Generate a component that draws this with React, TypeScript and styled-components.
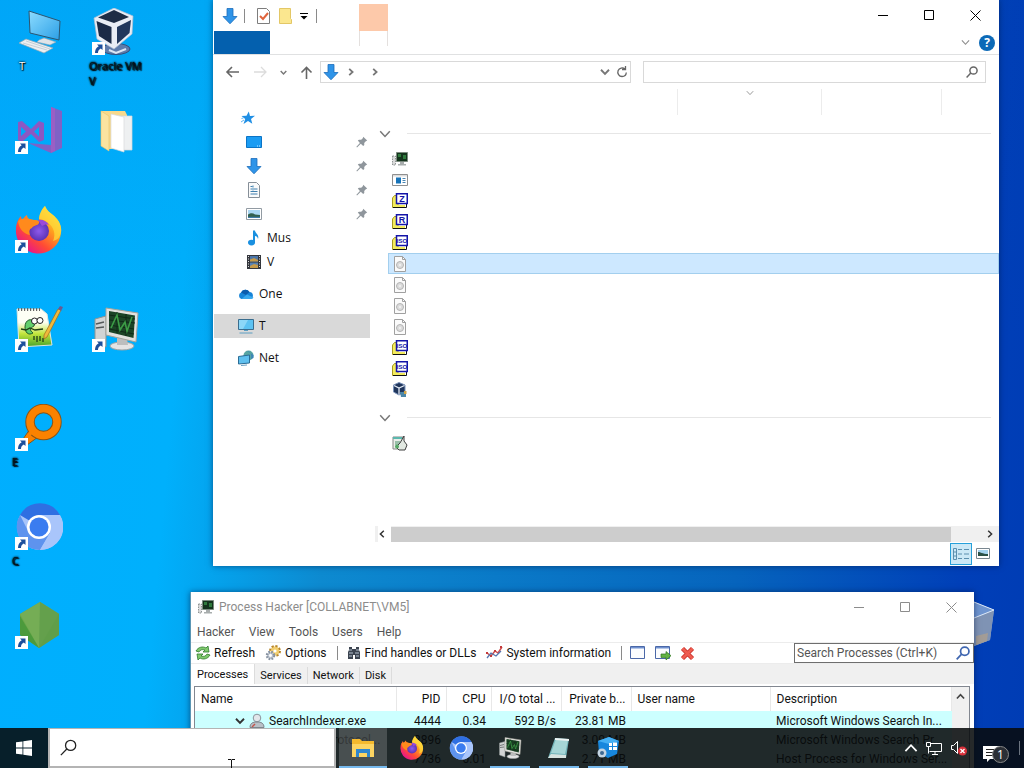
import { ReactNode } from 'react';
import styled, { createGlobalStyle } from 'styled-components';

const GlobalStyle = createGlobalStyle`
    * {
        box-sizing: border-box;
    }
    body {
        margin: 0;
        overflow: hidden;
        font-family: 'Open Sans', 'Noto Sans', sans-serif;
        font-size: 12px;
        color: #111;
    }
    button, input {
        font: inherit;
        color: inherit;
        border: 0;
        padding: 0;
        margin: 0;
        background: none;
    }
    ul {
        list-style: none;
        margin: 0;
        padding: 0;
    }
    svg {
        display: block;
        flex: none;
    }
`;

const Desktop = styled.main`
    position: relative;
    height: 100vh;
    overflow: hidden;
    background: linear-gradient(180deg, rgba(0, 60, 150, 0.07), transparent 45%),
        linear-gradient(95deg, #00aeff 0%, #00b0fc 19%, #0d8ad0 34%, #0664bd 72%, #003fb8 93%, #003cb4 100%);
`;

const Shortcuts = styled.div`
    display: grid;
    grid-auto-flow: column;
    grid-template-rows: repeat(7, 99px);
    grid-auto-columns: 77px;
    width: max-content;
`;

const ShortcutButton = styled.button`
    position: relative;
    display: flex;
    flex-direction: column;
    align-items: center;
    padding-top: 8px;
`;

const ShortcutLabel = styled.span<{ $light?: boolean }>`
    align-self: stretch;
    padding: 2px 0 0 ${props => (props.$light ? '19px' : '12px')};
    text-align: left;
    white-space: pre-line;
    font-size: 11px;
    line-height: 15px;
    color: ${props => (props.$light ? '#fff' : '#04141c')};
    text-shadow: 0 0 2px #000, 0 0 2px #000, 1px 1px 1px #000;
`;

const ArrowBadge = styled.svg`
    position: absolute;
    left: 15px;
    top: 42px;
`;

const RecycleBin = styled.div`
    position: absolute;
    right: 28px;
    top: 600px;
`;

const Window = styled.section`
    position: absolute;
    display: flex;
    flex-direction: column;
    background: #fff;
    box-shadow: 0 0 6px rgba(0, 20, 60, 0.55);
`;

const ExplorerWindow = styled(Window)`
    left: 213px;
    right: 25px;
    top: 0;
    height: 566px;
`;

const HackerWindow = styled(Window)`
    left: 190px;
    right: 50px;
    top: 592px;
    height: 200px;
    border-left: 1px solid #5a96b4;
    font-family: Roboto, 'Open Sans', sans-serif;
`;

const ExplorerTitle = styled.header`
    display: flex;
    height: 31px;
    padding: 0 1px 0 9px;
`;

const QuickAccess = styled.div`
    display: flex;
    align-items: center;
    gap: 6px;
    width: 137px;
`;

const Divider = styled.span<{ $color?: string }>`
    width: 1px;
    height: 14px;
    background: ${props => props.$color || '#8a8a8a'};
`;

const ContextTab = styled.div`
    width: 29px;
    height: 27px;
    margin-top: 4px;
    background: #fdc9aa;
`;

const WindowButtons = styled.div`
    display: flex;
    margin-left: auto;
`;

const WindowButton = styled.button<{ $dim?: boolean }>`
    display: grid;
    place-items: center;
    width: 46px;
    height: 30px;
    color: ${props => (props.$dim ? '#8c8c8c' : '#000')};
`;

const RibbonTabs = styled.div`
    display: flex;
    align-items: center;
    height: 24px;
    padding: 0 4px 0 1px;
    border-bottom: 1px solid #e0e1e2;
`;

const FileTab = styled.button`
    align-self: stretch;
    width: 56px;
    background: #0460ae;
`;

const ContextTabBody = styled.div`
    align-self: flex-start;
    width: 29px;
    height: 15px;
    margin: 0 auto 0 89px;
    border: solid #e4e0de;
    border-width: 0 1px;
`;

const HelpButton = styled.button`
    width: 16px;
    height: 16px;
    margin-left: 9px;
    border-radius: 50%;
    background: #0b69b7;
    color: #fff;
    font-weight: 700;
    line-height: 16px;
`;

const AddressRow = styled.div`
    display: flex;
    align-items: center;
    height: 34px;
    padding: 0 13px 0 12px;
`;

const NavButtons = styled.div`
    display: flex;
    align-items: center;
    justify-content: space-between;
    width: 88px;
    margin-right: 7px;
`;

const PathBox = styled.div`
    display: flex;
    align-items: center;
    gap: 8px;
    flex: 312 1 0;
    height: 22px;
    padding: 0 2px;
    border: 1px solid #d9d9d9;
`;

const PathTools = styled.div`
    display: flex;
    align-items: center;
    gap: 6px;
    margin-left: auto;
`;

const ExplorerSearch = styled.label`
    display: flex;
    align-items: center;
    flex: 341 1 0;
    height: 22px;
    margin-left: 12px;
    padding-right: 7px;
    border: 1px solid #d9d9d9;
    input {
        flex: 1;
        min-width: 0;
        outline: none;
    }
`;

const ExplorerBody = styled.div`
    display: flex;
    flex: 1;
    min-height: 0;
`;

const Tree = styled.nav`
    width: 157px;
    padding: 17px 0 0 1px;
`;

const TreeGroup = styled.ul`
    margin-bottom: 8px;
`;

const TreeItem = styled.button<{ $depth?: number; $active?: boolean }>`
    display: flex;
    align-items: center;
    width: 100%;
    height: 24px;
    padding: 0 2px 0 ${props => (props.$depth ? '32px' : '24px')};
    gap: 5px;
    text-align: left;
    background: ${props => (props.$active ? '#d9d9d9' : 'transparent')};
    span {
        flex: 1;
        line-height: 14px;
    }
`;

const FilePane = styled.div`
    display: flex;
    flex-direction: column;
    flex: 1;
    min-width: 0;
    padding-left: 5px;
`;

const ColumnHeads = styled.div`
    display: grid;
    grid-template-columns: 303px 144px 120px 1fr;
    height: 26px;
    margin-bottom: 4px;
    span {
        display: flex;
        justify-content: center;
        border-right: 1px solid #ececec;
    }
    span:last-child {
        border: 0;
    }
`;

const GroupHead = styled.div`
    display: flex;
    align-items: center;
    gap: 16px;
    height: 29px;
    padding: 0 8px 0 4px;
    hr {
        flex: 1;
        margin: 0;
        border: 0;
        border-top: 1px solid #e6e6e6;
    }
`;

const FileList = styled.ul`
    margin: 0 0 3px 13px;
`;

const FileRow = styled.li<{ $selected?: boolean }>`
    display: flex;
    align-items: center;
    height: 21px;
    padding-left: 3px;
    border: 1px solid ${props => (props.$selected ? '#a3cfee' : 'transparent')};
    background: ${props => (props.$selected ? '#cde8ff' : 'transparent')};
`;

const ScrollRow = styled.div`
    display: flex;
    align-items: center;
    height: 16px;
    margin-top: auto;
    padding: 0 5px 0 3px;
    background: #f0f0f0;
`;

const ScrollLeft = styled.button`
    width: 13px;
    height: 16px;
    background: #fff;
`;

const ScrollThumb = styled.div`
    flex: 1;
    height: 15px;
    margin-right: 35px;
    background: #cdcdcd;
`;

const ViewSwitch = styled.div`
    display: flex;
    justify-content: flex-end;
    align-items: center;
    height: 24px;
    padding-right: 5px;
`;

const ViewButton = styled.button<{ $active?: boolean }>`
    display: grid;
    place-items: center;
    width: 22px;
    height: 22px;
    border: 1px solid ${props => (props.$active ? '#26a0da' : 'transparent')};
    background: ${props => (props.$active ? '#cbe8f6' : 'transparent')};
`;

const HackerTitle = styled.header`
    display: flex;
    align-items: center;
    gap: 5px;
    height: 30px;
    padding-left: 7px;
    color: #8c8c8c;
`;

const MenuBar = styled.div`
    display: flex;
    gap: 14px;
    height: 20px;
    padding-left: 6px;
    line-height: 20px;
    color: #555;
`;

const Toolbar = styled.div`
    display: flex;
    align-items: center;
    height: 22px;
    padding-left: 4px;
    border: solid #ececec;
    border-width: 1px 0;
`;

const ToolButton = styled.button`
    display: flex;
    align-items: center;
    gap: 3px;
    height: 20px;
    margin-right: 10px;
`;

const ToolDivider = styled(Divider)`
    margin-right: 8px;
`;

const IconButton = styled.button`
    margin-right: 8px;
`;

const HackerSearch = styled.label`
    display: flex;
    align-items: center;
    width: 180px;
    height: 20px;
    margin-left: auto;
    padding: 0 3px 0 2px;
    border: 1px solid #6e6e6e;
    input {
        flex: 1;
        min-width: 0;
        outline: none;
    }
    input::placeholder {
        color: #555;
        opacity: 1;
    }
`;

const TabStrip = styled.div`
    display: flex;
    align-items: flex-end;
    height: 20px;
    background: #f0f0f0;
    font-size: 11px;
`;

const Tab = styled.button<{ $active?: boolean }>`
    height: ${props => (props.$active ? '20px' : '17px')};
    padding: 0 ${props => (props.$active ? '6px' : '5px')};
    border-right: 1px solid #dcdcdc;
    background: ${props => (props.$active ? '#fff' : 'transparent')};
`;

const TablePane = styled.div`
    display: flex;
    flex: 1;
    margin: 2px 4px 0 3px;
    border: 1px solid #828790;
    overflow: hidden;
`;

const ProcessTable = styled.table`
    flex: 1;
    align-self: flex-start;
    table-layout: fixed;
    width: 100%;
    border-collapse: collapse;
    th {
        height: 24px;
        padding: 0 5px 0 6px;
        font-weight: 400;
        border-right: 1px solid #e8e8e8;
    }
    td {
        height: 19px;
        padding: 0 5px 0 6px;
        line-height: 18px;
    }
    th, td {
        white-space: nowrap;
    }
`;

const ProcessRow = styled.tr`
    background: #ccffff;
`;

const Cell = styled.td<{ $right?: boolean }>`
    text-align: ${props => (props.$right ? 'right' : 'left')};
`;

const ProcessName = styled.div<{ $depth: number }>`
    display: flex;
    align-items: center;
    gap: 4px;
    padding-left: ${props => props.$depth * 17}px;
`;

const VerticalScroll = styled.div`
    width: 17px;
    padding: 5px 4px;
    background: #f0f0f0;
`;

const Taskbar = styled.footer`
    position: absolute;
    left: 0;
    right: 0;
    bottom: 0;
    display: flex;
    height: 40px;
    background: rgba(8, 11, 13, 0.88);
`;

const StartButton = styled.button`
    display: grid;
    place-items: center;
    width: 48px;
`;

const TaskSearch = styled.label`
    display: flex;
    align-items: center;
    width: 288px;
    margin-right: 3px;
    padding-left: 10px;
    border: 2px solid #b4b4b4;
    border-top-width: 1px;
    background: #fff;
    input {
        flex: 1;
        min-width: 0;
        outline: none;
    }
`;

const TaskButton = styled.button<{ $active?: boolean; $running?: boolean }>`
    display: flex;
    flex-direction: column;
    align-items: center;
    justify-content: space-between;
    width: 48px;
    padding-top: 8px;
    margin-right: 1px;
    background: ${props => (props.$active ? 'rgba(255, 255, 255, 0.18)' : 'transparent')};
    &::after {
        content: '';
        width: ${props => (props.$active ? '48px' : '40px')};
        height: 2px;
        background: ${props => (props.$active || props.$running ? '#76b9ed' : 'transparent')};
    }
`;

const Tray = styled.div`
    display: flex;
    align-items: center;
    gap: 7px;
    margin-left: auto;
    padding-right: 4px;
`;

const NoticeButton = styled.button`
    position: relative;
    width: 30px;
    height: 40px;
    margin: 0 3px 0 4px;
    padding: 12px 0 0 4px;
`;

const NoticeCount = styled.span`
    position: absolute;
    left: 13px;
    top: 18px;
    width: 17px;
    height: 17px;
    border: 1px solid #888;
    border-radius: 50%;
    background: #2b2f36;
    color: #fff;
    font-size: 12px;
    line-height: 15px;
    text-align: center;
`;

const PointerMark = styled.svg`
    position: absolute;
    left: 227px;
    bottom: 0;
`;

const Chevron = ({ size = 8, dir = 'down', color = '#777', weight = 1.3 }: any) => {
    const turn: any = { down: 0, left: 90, up: 180, right: 270 };
    return (
        <svg width={size} height={size} viewBox="0 0 8 8" fill="none" stroke={color} strokeWidth={weight}>
            <path d="M0.8 2.2 4 5.6 7.2 2.2" transform={`rotate(${turn[dir]} 4 4)`} />
        </svg>
    );
};

const DownArrow = ({ size = 16 }) => (
    <svg width={size} height={size} viewBox="0 0 16 16">
        <path d="M5 0.5h6v8h4L8 15.8 1 8.5h4z" fill="#2f94e8" stroke="#1c6dbb" strokeWidth="0.8" />
    </svg>
);

const Lens = ({ size = 13, color = '#666', weight = 1.6 }: any) => (
    <svg width={size} height={size} viewBox="0 0 16 16" fill="none" stroke={color} strokeWidth={weight}>
        <circle cx="10" cy="6" r="4.8" />
        <path d="M6.4 9.4 0.8 15.2" />
    </svg>
);

const MinimizeIcon = () => (
    <svg width="11" height="11" stroke="currentColor">
        <path d="M0 5.5h10" />
    </svg>
);

const MaximizeIcon = () => (
    <svg width="11" height="11" fill="none" stroke="currentColor">
        <path d="M0.5 0.5h9v9h-9z" />
    </svg>
);

const CloseIcon = () => (
    <svg width="11" height="11" fill="none" stroke="currentColor">
        <path d="M0.5 0.5l10 10M10.5 0.5l-10 10" />
    </svg>
);

const PinIcon = () => (
    <svg width="12" height="12" viewBox="0 0 12 12">
        <path d="M7.2 0.8 11.2 4.6 9.8 5.2 8.2 7 8.3 9 7.2 10 4.8 7.8 1 11.4 0.4 10.8 3.9 7 1.8 4.6 3 3.8 5.2 3.8 6.8 2.2z" fill="#8f969c" />
    </svg>
);

const StarIcon = () => (
    <svg width="18" height="16" viewBox="0 0 18 16">
        <path d="M10.8 1.5 12 6l5-.2-4 3.200 1.300 4.800L10 11l-4.500 3 1.700-5L3.500 6l5-.2z" fill="#1f8fe5" />
        <path d="M3 12l3-2M3.500 8.500l2-.6" stroke="#5db3f2" />
    </svg>
);

const ScreenIcon = () => (
    <svg width="16" height="16" viewBox="0 0 16 16">
        <path d="M0.5 2.5h15v11h-15z" fill="#1b9cf3" stroke="#0b74c6" />
        <path d="M11 12h1M13 12h1" stroke="#cdeaff" />
    </svg>
);

const DocumentIcon = () => (
    <svg width="16" height="16" viewBox="0 0 16 16">
        <path d="M2.5 0.5h8l3 3v12h-11z" fill="#fafafa" stroke="#868f98" />
        <path d="M4.5 4.5h3M4.5 7h7M4.5 9.5h7M4.5 12h7" stroke="#3f7fae" />
        <path d="M7 3v6" stroke="#9ac0d8" />
    </svg>
);

const PictureIcon = () => (
    <svg width="16" height="16" viewBox="0 0 16 16">
        <path d="M0.5 2.5h15v11h-15z" fill="#fff" stroke="#929ba3" />
        <path d="M2 4h12v8H2z" fill="#a9d7f3" />
        <path d="M2 8.500c3-2 5-1.500 7 0l5 .5v3H2z" fill="#32604f" />
        <path d="M2 10.800h12V12H2z" fill="#3f7ca8" />
    </svg>
);

const MusicIcon = () => (
    <svg width="16" height="16" viewBox="0 0 16 16" fill="#1a90e0">
        <ellipse cx="5.500" cy="12.600" rx="3.500" ry="2.800" />
        <path d="M7 0.500h2c.3 3 4.500 4 3 8.500-.3-2-1.500-2.800-3-3v7H7z" />
    </svg>
);

const VideoIcon = () => (
    <svg width="16" height="16" viewBox="0 0 16 16">
        <path d="M1 1h14v14H1z" fill="#33363c" />
        <path d="M4 2h8v5.500H4z" fill="#4c76a8" />
        <path d="M4 8.500h8V14H4z" fill="#5780b0" />
        <path d="M4 5.500 8 4l4 2v1.500H4zM4 12l4-2 4 1v3H4z" fill="#c59a4a" />
        <path d="M2.500 2v12M13.500 2v12" stroke="#ddd" strokeDasharray="1 1.500" />
    </svg>
);

const CloudIcon = () => (
    <svg width="16" height="16" viewBox="0 0 16 16">
        <path d="M3.500 13a3.500 3.500 0 01-.5-6.500A4.800 4.800 0 0111.500 6 3.600 3.600 0 0112.500 13z" fill="#1684d8" />
        <path d="M3 6.500A4.800 4.800 0 0111.500 6L8 9z" fill="#0b5cad" />
        <path d="M3.500 13 9 8.500l6.500 3A2.800 2.800 0 0112.500 13z" fill="#39a9ee" />
    </svg>
);

const ThisPcIcon = () => (
    <svg width="16" height="16" viewBox="0 0 16 16">
        <path d="M0.500 1.500h15v10h-15z" fill="#5cc2f2" stroke="#3a6d8e" />
        <path d="M1 2h9L5 11H1z" fill="#8cd7f8" />
        <path d="M6 12.500h4M1.500 15h13" stroke="#5c9ec2" />
    </svg>
);

const NetworkIcon = () => (
    <svg width="16" height="16" viewBox="0 0 16 16">
        <circle cx="10.500" cy="5.500" r="5" fill="#58a5a2" />
        <path d="M9 1c3 0 5 3 4 8l2.500-1V5z" fill="#3c85b8" />
        <path d="M0.500 6.500 11.500 5v8l-11 1z" fill="#5fc0ef" stroke="#2b6c95" />
        <path d="M3 15.500l6-.500" stroke="#6ca0c2" />
    </svg>
);

const ArchiveIcon = ({ label }: { label: string }) => (
    <svg width="16" height="16" viewBox="0 0 16 16">
        <path d="M0.500 5 2.500 2.500H6V14.500H0.500z" fill="#f4ec5c" stroke="#a89a20" />
        <path d="M1 12h12v2.500H1z" fill="#f4ec5c" />
        <path d="M1 14.500h13.500V10" stroke="#111" fill="none" />
        <path d="M4.500 0.750h10.750v9.750H4.500z" fill="#fff" stroke="#1414a8" strokeWidth="1.500" />
        <text x="10" y={label.length > 1 ? 8 : 9} textAnchor="middle" fontFamily="Liberation Sans" fontWeight="700" fontSize={label.length > 1 ? 6 : 9} fill="#1414a8">
            {label}
        </text>
    </svg>
);

const DiscFileIcon = () => (
    <svg width="16" height="16" viewBox="0 0 16 16">
        <path d="M2.500 0.500h8l3 3v12h-11z" fill="#fbfbfb" stroke="#a0a0a0" />
        <path d="M10.500 0.500v3h3" fill="none" stroke="#a0a0a0" />
        <circle cx="8" cy="9" r="3.500" fill="#dcdcdc" stroke="#b4b4b4" />
        <circle cx="8" cy="9" r="1" fill="#f4f4f4" />
    </svg>
);

const AppFileIcon = () => (
    <svg width="16" height="16" viewBox="0 0 16 16">
        <path d="M0.500 2.500h15v11h-15z" fill="#fff" stroke="#8f8f8f" />
        <path d="M1 3h14v1.500H1z" fill="#dcdcdc" />
        <path d="M4 5.500h5v6H4z" fill="#1673b8" />
        <path d="M10.500 6.500h3M10.500 8.500h3M10.500 10.500h3" stroke="#4a86b4" />
    </svg>
);

const InstallerIcon = () => (
    <svg width="16" height="16" viewBox="0 0 16 16">
        <path d="M1 2h10v12H1z" fill="#e9eee9" stroke="#858585" />
        <path d="M1 2h9v2H1z" fill="#5bb8ae" />
        <path d="M3 7h5M3 9h4" stroke="#4a8f6a" />
        <path d="M12 1v5l3 4-2 5H7l-3-3 4-4z" fill="#e2e9e2" stroke="#2b2b2b" strokeWidth="0.900" />
        <circle cx="5" cy="11.500" r="2" fill="#55a866" />
    </svg>
);

const HackerIcon = ({ size = 48 }) => (
    <svg width={size} height={size} viewBox="0 0 48 48">
        <path d="M3 14l11-3v31L3 38z" fill="#d2d4d4" stroke="#8f9494" />
        <path d="M4 19l8-2M4 23l8-1" stroke="#55595a" strokeWidth="1.500" />
        <ellipse cx="30" cy="41" rx="12" ry="4" fill="#e4e4e4" stroke="#9fa3a3" />
        <path d="M25 33h10l1 7H25z" fill="#bcbebe" />
        <path d="M14 3l32 5-2 29-30-7z" fill="#e2e2de" stroke="#a3a39b" />
        <path d="M17 6l26 4.500-1.500 22.500L17 27z" fill="#1c4426" />
        <path d="M17 10l26 4M17 15l26 3M17 20l25 4M17 24l25 5M25 7v21M34 9v22" stroke="#0f2a17" />
        <path d="M19 23l6-13 3 15 5-8 2 9 5-14" fill="none" stroke="#3c9c46" strokeWidth="1.600" />
    </svg>
);

const SmallHackerIcon = () => (
    <svg width="16" height="16" viewBox="0 0 16 16">
        <path d="M0.500 5h3v9h-3z" fill="#dadada" stroke="#8f9494" strokeDasharray="1.500 1" />
        <path d="M4.500 1.500h11v9h-11z" fill="#14331c" stroke="#7b8a7e" />
        <path d="M6 3h3v3H6zM11 4h3v4h-3z" fill="#2f7a3c" />
        <path d="M8 11h4v2H8zM6 13h8v1.500H6z" fill="#a8adad" />
    </svg>
);

const VirtualBoxIcon = ({ size = 48 }) => (
    <svg width={size} height={size} viewBox="0 0 48 48">
        <ellipse cx="24" cy="41" rx="14" ry="5.500" fill="#5f7cab" stroke="#34507e" />
        <path d="M17 42l7 3 10-4" stroke="#dde6f4" strokeWidth="2" fill="none" />
        <path d="M22 0 41 8l-1 18-18 15L5 31 2 10z" fill="#e9edf5" stroke="#b3bfd2" strokeWidth="0.700" />
        <path d="M22 2 37 9 22 15 6 9.500z" fill="#1e2c45" />
        <path d="M4.500 13l15 6v17L7 28z" fill="#1b2a47" />
        <path d="M25 19l14-7-1.500 13L25 36z" fill="#22375c" />
    </svg>
);

const SmallVirtualBoxIcon = () => (
    <svg width="16" height="16" viewBox="0 0 16 16">
        <path d="M7 0.500 13 3v6.500L7 13 1.500 10V3z" fill="#20365c" stroke="#7b93ba" />
        <path d="M2 3.500 7 6l5.500-2.500M7 6v6.500" stroke="#e4ebf6" strokeWidth="1.300" fill="none" />
        <path d="M8 10h6v5H9z" fill="#4b86a8" />
        <path d="M12 9h2.500v3H12z" fill="#d2a448" />
    </svg>
);

const FirefoxIcon = ({ size = 48 }) => (
    <svg width={size} height={size} viewBox="0 0 48 48">
        <defs>
            <linearGradient id="fire" x1="0.850" y1="0.100" x2="0.200" y2="0.900">
                <stop offset="0" stopColor="#fff04a" />
                <stop offset="0.350" stopColor="#ffa01e" />
                <stop offset="0.700" stopColor="#ff4a35" />
                <stop offset="1" stopColor="#e8168a" />
            </linearGradient>
            <radialGradient id="globe">
                <stop offset="0.100" stopColor="#8a56e8" />
                <stop offset="1" stopColor="#5b33b4" />
            </radialGradient>
        </defs>
        <path d="M30 0c2 6 8 8 11 12 3 3 6 8 5 15A22.500 22.500 0 111 23c0-6 3-11 5-13 0 2 1 4 2 5 0-3 2-5 4-6 0 3 2 4 4 5 3 0 5 1 8 1 0-6 3-12 6-15z" fill="url(#fire)" />
        <path d="M30 0c2 6 8 8 11 12 3 3 6 9 5 14-1 6-4 8-8 9 3-7 1-14-6-19-4-3-8-3-8-3 0-5 3-10 6-13z" fill="#ffd83a" opacity=".75" />
        <circle cx="24" cy="25" r="10" fill="url(#globe)" />
        <path d="M3 15c5-4 12-2 16-1 4 0 6 1 5 3-1 3-6 2-7 5-3 1-3 4-2 7-6-1-11-6-12-14z" fill="#ff8a1c" />
        <path d="M23 14c4-1 9 1 11 5-3-1-5 0-7 1z" fill="#9a4ad8" />
    </svg>
);

const ChromiumIcon = ({ size = 48 }) => (
    <svg width={size} height={size} viewBox="0 0 48 48">
        <circle cx="25" cy="24" r="23" fill="#a7c4fa" />
        <path d="M25 24 5 12A23 23 0 0145 12H25z" fill="#2f6fe2" />
        <path d="M5 12A23 23 0 0025 47L35 30 14 30z" fill="#5e93ee" />
        <path d="M45 12H25L35 30 25 47A23 23 0 0045 12z" fill="#a9c5fb" />
        <circle cx="24" cy="24" r="12" fill="#fff" />
        <circle cx="24" cy="24" r="9.500" fill="#3a7cf0" />
    </svg>
);

const ComputerIcon = () => (
    <svg width="48" height="48" viewBox="0 0 48 48">
        <defs>
            <linearGradient id="glass" x1="0" y1="0" x2="1" y2="1">
                <stop offset="0" stopColor="#8ddcff" />
                <stop offset="1" stopColor="#2b9fe6" />
            </linearGradient>
        </defs>
        <path d="M24 32l5-2 12 4-6 3-13-3z" fill="#dfe4e8" stroke="#8fa6b5" strokeWidth="0.600" />
        <path d="M14 3l31 10-1 19-29-7z" fill="url(#glass)" stroke="#2c5570" />
        <path d="M4 35l7-4 27 9-9 5z" fill="#eceff1" stroke="#93a7b3" strokeWidth="0.700" />
        <path d="M8 35l24 7M11 33l24 8" stroke="#b5c2cb" strokeWidth="0.700" />
    </svg>
);

const StudioIcon = () => (
    <svg width="48" height="48" viewBox="0 0 48 48">
        <path d="M36 0l11 4v37l-11 5-23-10 23 2z" fill="#7f62c6" />
        <path d="M36 0l4 1.500V44l-4 2z" fill="#9a5fc4" />
        <path d="M3 15l4-1 9 8 8-8 5 2v17l-5 2-8-8-9 8-4-2zM6 20v9l5-4.500zM24 20l-5 4.500 5 5z" fill="#8b58c2" fillRule="evenodd" />
    </svg>
);

const NotesIcon = () => (
    <svg width="48" height="48" viewBox="0 0 48 48">
        <defs>
            <linearGradient id="meadow" x1="0" y1="0" x2="0" y2="1">
                <stop offset="0.350" stopColor="#fdfff5" />
                <stop offset="0.650" stopColor="#c3e53c" />
                <stop offset="1" stopColor="#45a22c" />
            </linearGradient>
        </defs>
        <path d="M2 4h24l6 5 5 31-33 2z" fill="url(#meadow)" stroke="#dfe6df" />
        <path d="M3 4.500h22" stroke="#666" strokeWidth="3" strokeDasharray="1.200 1.800" />
        <path d="M10 22c0-8 7-9 10-5l-1 4c-4 2-5 4-1 7-5 3-8-1-8-6z" fill="#62cf6c" stroke="#1f5a28" />
        <circle cx="19.500" cy="16" r="3" fill="#fff" stroke="#222" />
        <circle cx="25" cy="15.500" r="3" fill="#fff" stroke="#222" />
        <path d="M6 24l5 1 4-2 5 2 8-1M19 35v-4M22 37v-6M25 36v-5M28 37v-4" stroke="#1f3d16" fill="none" strokeWidth="1.300" />
        <path d="M43 4l3 1-14 27-3 2 0-4z" fill="#f0b93c" stroke="#a06c1a" strokeWidth="0.700" />
        <path d="M43 4l2-3 3 1-2 4z" fill="#6a5a92" />
    </svg>
);

const FinderIcon = () => (
    <svg width="48" height="48" viewBox="0 0 48 48">
        <path d="M15 25 6 38l6 3 11-8" fill="#fb8200" stroke="#8a5416" />
        <circle cx="28.500" cy="18" r="13.500" fill="none" stroke="#8a5416" strokeWidth="9.500" />
        <circle cx="28.500" cy="18" r="13.500" fill="none" stroke="#fb8200" strokeWidth="7.500" />
        <path d="M16 25l-6 10 9-6z" fill="#fb8200" />
    </svg>
);

const NodeIcon = () => (
    <svg width="48" height="48" viewBox="0 0 48 48">
        <path d="M25 0l19 12v21L24 46 5 33V12z" fill="#6aa84a" />
        <path d="M5 12 25 0l19 12-20 34z" fill="#75ad55" />
        <path d="M25 0l19 12v21L24 46z" fill="#5c9a48" opacity=".7" />
        <path d="M5 14l19 32L5 33z" fill="#4c9a3c" />
    </svg>
);

const FolderIcon = () => (
    <svg width="48" height="48" viewBox="0 0 48 48">
        <path d="M9 4h24l2 4v34H16L9 38z" fill="#f7d98c" />
        <path d="M26 9h14v34H28z" fill="#eef0f1" stroke="#d5d9da" strokeWidth="0.700" />
        <path d="M19 7l13 3v35l-13-4z" fill="#fff" stroke="#d8dadb" strokeWidth="0.700" />
        <path d="M9 4l8 5v35l-8-5z" fill="#fbe3a0" stroke="#e5c26c" strokeWidth="0.600" />
    </svg>
);

const BinIcon = () => (
    <svg width="44" height="48" viewBox="0 0 44 48">
        <path d="M2 10 22 2l20 8-4 30-16 6-16-6z" fill="#8fa6cb" />
        <path d="M22 18l20-8-4 30-16 6z" fill="#7f93b4" />
        <path d="M2 10 22 2l20 8-20 8z" fill="#6f95d0" stroke="#dce8f8" />
        <path d="M24 36l12-3-1 8-11 4z" fill="#a39c96" />
    </svg>
);

const ExplorerIcon = () => (
    <svg width="24" height="24" viewBox="0 0 24 24">
        <path d="M1 3h8l2 2h12v16H1z" fill="#f4b92e" />
        <path d="M1 8h22v13H1z" fill="#fcd462" />
        <path d="M5 13h14v8h-3v-4H8v4H5z" fill="#2f86cf" />
    </svg>
);

const NotepadIcon = () => (
    <svg width="24" height="24" viewBox="0 0 24 24">
        <path d="M8 2l14 1-3 19H1z" fill="#72b3b8" />
        <path d="M9 3l12 1-3 14-14-1z" fill="#a6d6d6" />
        <path d="M8 2l14 1v2L8 4z" fill="#eef3f3" />
        <path d="M1 22l3-4 15 1v3z" fill="#d8e4e0" />
    </svg>
);

const SetupIcon = () => (
    <svg width="24" height="24" viewBox="0 0 24 24">
        <path d="M2 5 13 1l10 4-2 13-9 4-9-5z" fill="#1787dd" />
        <path d="M2 5 13 1l10 4-10 3z" fill="#45b0f4" />
        <path d="M13 7h3v3h-3zM17 6.500h4v3.500h-4zM13 11h3v3h-3zM17 11h4v3h-4z" fill="#fff" />
        <circle cx="6" cy="17" r="4.500" fill="#c4d4e2" />
        <circle cx="6" cy="17" r="2" fill="#3d6892" />
    </svg>
);

const RefreshIcon = () => (
    <svg width="16" height="16" viewBox="0 0 16 16" fill="#7fca6c" stroke="#2f7a2c" strokeWidth="0.800">
        <path d="M1 6c2-4 7-5 10-3l2-2 1 6-6 0 2-2C7 4 5 5 4 7z" />
        <path d="M15 10c-2 4-7 5-10 3l-2 2-1-6 6 0-2 2c3 1 5 0 6-2z" />
    </svg>
);

const GearIcon = () => (
    <svg width="17" height="16" viewBox="0 0 17 16">
        <circle cx="10" cy="6" r="4.500" fill="#ecc662" stroke="#b8872b" strokeWidth="3" strokeDasharray="2 1.500" />
        <circle cx="10" cy="6" r="4" fill="#f2cf70" />
        <circle cx="5.500" cy="10.500" r="3.500" fill="#c7ced8" stroke="#8792a1" strokeWidth="2.500" strokeDasharray="1.600 1.200" />
        <circle cx="10" cy="6" r="1.600" fill="#fff" />
        <circle cx="5.500" cy="10.500" r="1.400" fill="#fff" />
    </svg>
);

const BinocularsIcon = () => (
    <svg width="16" height="16" viewBox="0 0 16 16">
        <path d="M3 2h3v2h4V2h3v3l1 2v7H9v-4H7v4H2V7l1-2z" fill="#3c4450" />
        <path d="M3 8h4M9 8h4M3 11h3M10 11h3M3 5h3M10 5h3" stroke="#b8c4d2" />
    </svg>
);

const GraphIcon = () => (
    <svg width="17" height="16" viewBox="0 0 17 16" fill="none">
        <path d="M1 8l4 3 4-5 3 2 4-6" stroke="#d14d4d" strokeWidth="1.500" />
        <path d="M1 13l4-5 5 3 5-5" stroke="#5577b0" strokeWidth="1.300" />
        <path d="M0 7h2v2H0zM8 5h2v2H8zM4 10h2v2H4zM14 1h2v2h-2z" fill="#c33a3a" />
    </svg>
);

const PanelIcon = ({ arrow }: { arrow?: boolean }) => (
    <svg width="17" height="16" viewBox="0 0 17 16">
        <path d="M0.500 1.500h14v12h-14z" fill="#fbfcfe" stroke="#4b68a8" />
        <path d="M1 2h13v1.500H1z" fill="#6f90cf" />
        {arrow && <path d="M6 9h5V6.500l5 4.200-5 4.200v-2.500H6z" fill="#63b344" stroke="#2e7420" strokeWidth="0.700" />}
    </svg>
);

const CrossIcon = () => (
    <svg width="15" height="15" viewBox="0 0 15 15">
        <path d="M2.500 2.500l10 10M12.500 2.500l-10 10" stroke="#c92f2a" strokeWidth="4.400" />
        <path d="M2.500 2.500l10 10M12.500 2.500l-10 10" stroke="#ee5c50" strokeWidth="2.800" />
    </svg>
);

const UserIcon = () => (
    <svg width="16" height="16" viewBox="0 0 16 16">
        <circle cx="8" cy="5" r="3.800" fill="#e2e6ea" stroke="#8b949c" />
        <path d="M1 14.500C1 10 4 9 8 9s7 1 7 5.500z" fill="#b9c0c6" stroke="#7d868d" />
        <path d="M3 14l3-3" stroke="#c2554c" strokeWidth="1.400" />
    </svg>
);

const ShortcutArrow = () => (
    <ArrowBadge width="13" height="13" viewBox="0 0 13 13">
        <path d="M0 0h13v13H0z" fill="#fff" />
        <path d="M5 2.500h5.500V8L8.800 6.400C6.500 7.600 6 9 6 11H3c0-3 1-5.500 3.700-6.800z" fill="#1d4f9c" />
    </ArrowBadge>
);

type ShortcutProps = { icon: ReactNode; name: string; label?: string; light?: boolean; linked?: boolean };

const Shortcut = ({ icon, name, label, light, linked = true }: ShortcutProps) => (
    <ShortcutButton aria-label={name}>
        {icon}
        {linked && <ShortcutArrow />}
        {label && <ShortcutLabel $light={light}>{label}</ShortcutLabel>}
    </ShortcutButton>
);

const pinned = [
    { name: 'Screen', icon: <ScreenIcon /> },
    { name: 'Downloads', icon: <DownArrow /> },
    { name: 'Documents', icon: <DocumentIcon /> },
    { name: 'Pictures', icon: <PictureIcon /> },
];

const files = [
    <SmallHackerIcon />,
    <AppFileIcon />,
    <ArchiveIcon label="Z" />,
    <ArchiveIcon label="R" />,
    <ArchiveIcon label="ISO" />,
    <DiscFileIcon />,
    <DiscFileIcon />,
    <DiscFileIcon />,
    <DiscFileIcon />,
    <ArchiveIcon label="ISO" />,
    <ArchiveIcon label="ISO" />,
    <SmallVirtualBoxIcon />,
];

const processes = [
    { name: 'SearchIndexer.exe', depth: 2, open: true, pid: '4444', cpu: '0.34', io: '592 B/s', mem: '23.81 MB', text: 'Microsoft Windows Search In...' },
    { name: 'SearchProtocol...', depth: 4, pid: '3896', cpu: '', io: '', mem: '3.00 MB', text: 'Microsoft Windows Search Pr...' },
    { name: 'svchost.exe', depth: 3, pid: '7736', cpu: '0.01', io: '', mem: '2.71 MB', text: 'Host Process for Windows Ser...' },
];

const WindowControls = ({ dim }: { dim?: boolean }) => (
    <WindowButtons>
        <WindowButton $dim={dim} aria-label="Minimize">
            <MinimizeIcon />
        </WindowButton>
        <WindowButton $dim={dim} aria-label="Maximize">
            <MaximizeIcon />
        </WindowButton>
        <WindowButton $dim={dim} aria-label="Close">
            <CloseIcon />
        </WindowButton>
    </WindowButtons>
);

const Explorer = () => (
    <ExplorerWindow>
        <ExplorerTitle>
            <QuickAccess>
                <DownArrow />
                <Divider />
                <svg width="20" height="16" viewBox="0 0 20 16">
                    <path d="M6.500 0.500h9l3 3v12h-12z" fill="#fff" stroke="#7d7d7d" />
                    <path d="M9 8l3 3 5-6" fill="none" stroke="#e0643c" strokeWidth="2" />
                </svg>
                <svg width="16" height="16" viewBox="0 0 16 16">
                    <path d="M2.500 0.500h11v10l1 1v4h-12z" fill="#fbe78f" stroke="#e3c766" />
                </svg>
                <svg width="11" height="8" viewBox="0 0 11 8">
                    <path d="M1 1.500h8" stroke="#000" />
                    <path d="M1.500 4h7L5 7.500z" />
                </svg>
                <Divider />
            </QuickAccess>
            <ContextTab />
            <WindowControls />
        </ExplorerTitle>
        <RibbonTabs>
            <FileTab aria-label="File" />
            <ContextTabBody />
            <Chevron size={9} color="#8c8c8c" weight={1} />
            <HelpButton>?</HelpButton>
        </RibbonTabs>
        <AddressRow>
            <NavButtons>
                <svg width="15" height="12" viewBox="0 0 15 12" fill="none" stroke="#666" strokeWidth="1.600">
                    <path d="M14 6H2M7 1 2 6l5 5" />
                </svg>
                <svg width="15" height="12" viewBox="0 0 15 12" fill="none" stroke="#dcdcdc" strokeWidth="1.300">
                    <path d="M1 6h12M8 1l5 5-5 5" />
                </svg>
                <Chevron size={7} weight={1.600} />
                <svg width="13" height="13" viewBox="0 0 13 13" fill="none" stroke="#666" strokeWidth="1.600">
                    <path d="M6.500 13V2M1.500 6.500 6.500 1.500l5 5" />
                </svg>
            </NavButtons>
            <PathBox>
                <DownArrow />
                <Chevron size={8} dir="right" weight={1.800} />
                <span />
                <Chevron size={8} dir="right" weight={1.800} />
                <PathTools>
                    <Chevron size={10} weight={1.500} />
                    <svg width="12" height="12" viewBox="0 0 12 12" fill="none" stroke="#666" strokeWidth="1.300">
                        <path d="M9 3A4.300 4.300 0 106 10.500 4.300 4.300 0 0010.300 6.500M9.500 0v3.500H6" />
                    </svg>
                </PathTools>
            </PathBox>
            <ExplorerSearch>
                <input type="text" aria-label="Search files" />
                <Lens size={12} weight={2} />
            </ExplorerSearch>
        </AddressRow>
        <ExplorerBody>
            <Tree>
                <TreeGroup>
                    <li>
                        <TreeItem aria-label="Quick access">
                            <StarIcon />
                        </TreeItem>
                    </li>
                    {pinned.map(item => (
                        <li key={item.name}>
                            <TreeItem $depth={1} aria-label={item.name}>
                                {item.icon}
                                <span />
                                <PinIcon />
                            </TreeItem>
                        </li>
                    ))}
                    <li>
                        <TreeItem $depth={1}>
                            <MusicIcon />
                            <span>Mus</span>
                        </TreeItem>
                    </li>
                    <li>
                        <TreeItem $depth={1}>
                            <VideoIcon />
                            <span>V</span>
                        </TreeItem>
                    </li>
                </TreeGroup>
                <TreeGroup>
                    <li>
                        <TreeItem>
                            <CloudIcon />
                            <span>One</span>
                        </TreeItem>
                    </li>
                </TreeGroup>
                <TreeGroup>
                    <li>
                        <TreeItem $active>
                            <ThisPcIcon />
                            <span>T</span>
                        </TreeItem>
                    </li>
                </TreeGroup>
                <TreeGroup>
                    <li>
                        <TreeItem>
                            <NetworkIcon />
                            <span>Net</span>
                        </TreeItem>
                    </li>
                </TreeGroup>
            </Tree>
            <FilePane>
                <ColumnHeads>
                    <span />
                    <span>
                        <Chevron color="#999" weight={1} />
                    </span>
                    <span />
                    <span />
                </ColumnHeads>
                <GroupHead>
                    <Chevron size={12} weight={1} />
                    <hr />
                </GroupHead>
                <FileList>
                    {files.map((icon, i) => (
                        <FileRow key={i} $selected={i === 5}>
                            {icon}
                        </FileRow>
                    ))}
                </FileList>
                <GroupHead>
                    <Chevron size={12} weight={1} />
                    <hr />
                </GroupHead>
                <FileList>
                    <FileRow>
                        <InstallerIcon />
                    </FileRow>
                </FileList>
                <ScrollRow>
                    <ScrollLeft aria-label="Scroll left">
                        <Chevron dir="left" color="#333" weight={1.500} />
                    </ScrollLeft>
                    <ScrollThumb />
                    <Chevron dir="right" color="#333" weight={1.500} />
                </ScrollRow>
            </FilePane>
        </ExplorerBody>
        <ViewSwitch>
            <ViewButton $active aria-label="Details">
                <svg width="16" height="14" viewBox="0 0 16 14" fill="none" stroke="#5b8fae">
                    <path d="M0.500 1.500h3v11h-3zM0.500 5h3M0.500 9h3M5 2.500h4M5 7h4M5 11.500h4M11 2.500h5M11 7h5M11 11.500h5" />
                </svg>
            </ViewButton>
            <ViewButton aria-label="Large icons">
                <svg width="14" height="12" viewBox="0 0 14 12">
                    <path d="M0.500 0.500h13v10h-13z" fill="#fff" stroke="#7a8790" />
                    <path d="M2 2h10v6H2z" fill="#a4d2ee" />
                    <path d="M2 4c3 0 4 2 10 2v2H2z" fill="#2c5147" />
                </svg>
            </ViewButton>
        </ViewSwitch>
    </ExplorerWindow>
);

const ProcessHacker = () => (
    <HackerWindow>
        <HackerTitle>
            <SmallHackerIcon />
            <span>Process Hacker [COLLABNET\VM5]</span>
            <WindowControls dim />
        </HackerTitle>
        <MenuBar>
            {['Hacker', 'View', 'Tools', 'Users', 'Help'].map(item => (
                <button key={item}>{item}</button>
            ))}
        </MenuBar>
        <Toolbar>
            <ToolButton>
                <RefreshIcon />
                Refresh
            </ToolButton>
            <ToolButton>
                <GearIcon />
                Options
            </ToolButton>
            <ToolDivider />
            <ToolButton>
                <BinocularsIcon />
                Find handles or DLLs
            </ToolButton>
            <ToolButton>
                <GraphIcon />
                System information
            </ToolButton>
            <ToolDivider />
            <IconButton aria-label="Show panel">
                <PanelIcon />
            </IconButton>
            <IconButton aria-label="Move panel">
                <PanelIcon arrow />
            </IconButton>
            <IconButton aria-label="Terminate">
                <CrossIcon />
            </IconButton>
            <HackerSearch>
                <input type="text" placeholder="Search Processes (Ctrl+K)" aria-label="Search Processes" />
                <Lens size={14} color="#3f66b0" weight={2} />
            </HackerSearch>
        </Toolbar>
        <TabStrip>
            <Tab $active>Processes</Tab>
            <Tab>Services</Tab>
            <Tab>Network</Tab>
            <Tab>Disk</Tab>
        </TabStrip>
        <TablePane>
            <ProcessTable>
                <colgroup>
                    <col style={{ width: 201 }} />
                    <col style={{ width: 50 }} />
                    <col style={{ width: 45 }} />
                    <col style={{ width: 70 }} />
                    <col style={{ width: 70 }} />
                    <col style={{ width: 139 }} />
                    <col />
                </colgroup>
                <thead>
                    <tr>
                        <Cell as="th">Name</Cell>
                        <Cell as="th" $right>PID</Cell>
                        <Cell as="th" $right>CPU</Cell>
                        <Cell as="th" $right>I/O total ...</Cell>
                        <Cell as="th" $right>Private b...</Cell>
                        <Cell as="th">User name</Cell>
                        <Cell as="th">Description</Cell>
                    </tr>
                </thead>
                <tbody>
                    {processes.map(row => (
                        <ProcessRow key={row.pid}>
                            <Cell>
                                <ProcessName $depth={row.depth}>
                                    {row.open && <Chevron size={10} color="#333" weight={1.500} />}
                                    <UserIcon />
                                    {row.name}
                                </ProcessName>
                            </Cell>
                            <Cell $right>{row.pid}</Cell>
                            <Cell $right>{row.cpu}</Cell>
                            <Cell $right>{row.io}</Cell>
                            <Cell $right>{row.mem}</Cell>
                            <Cell />
                            <Cell>{row.text}</Cell>
                        </ProcessRow>
                    ))}
                </tbody>
            </ProcessTable>
            <VerticalScroll>
                <Chevron size={9} dir="up" color="#444" weight={1.500} />
            </VerticalScroll>
        </TablePane>
    </HackerWindow>
);

const App = () => (
    <Desktop>
        <GlobalStyle />
        <Shortcuts>
            <Shortcut name="T" label="T" light linked={false} icon={<ComputerIcon />} />
            <Shortcut name="Visual Studio" icon={<StudioIcon />} />
            <Shortcut name="Firefox" icon={<FirefoxIcon />} />
            <Shortcut name="Notepad++" icon={<NotesIcon />} />
            <Shortcut name="Finder" label="E" icon={<FinderIcon />} />
            <Shortcut name="Chromium" label="C" icon={<ChromiumIcon />} />
            <Shortcut name="Node" icon={<NodeIcon />} />
            <Shortcut name="Oracle VM" label={'Oracle VM\nV'} icon={<VirtualBoxIcon />} />
            <Shortcut name="Folder" linked={false} icon={<FolderIcon />} />
            <span />
            <Shortcut name="Process Hacker" icon={<HackerIcon />} />
        </Shortcuts>
        <RecycleBin>
            <BinIcon />
        </RecycleBin>
        <Explorer />
        <ProcessHacker />
        <Taskbar>
            <StartButton aria-label="Start">
                <svg width="16" height="16" viewBox="0 0 16 16" fill="#fff">
                    <path d="M0 2.300 6.500 1.400v6.200H0zM7.300 1.300 16 0v7.600H7.300zM0 8.400h6.500v6.200L0 13.700zM7.300 8.400H16V16l-8.700-1.300z" />
                </svg>
            </StartButton>
            <TaskSearch>
                <Lens size={17} color="#222" weight={1.200} />
                <input type="text" aria-label="Search" />
            </TaskSearch>
            <TaskButton $active aria-label="File Explorer">
                <ExplorerIcon />
            </TaskButton>
            <TaskButton aria-label="Firefox">
                <FirefoxIcon size={24} />
            </TaskButton>
            <TaskButton aria-label="Chromium">
                <ChromiumIcon size={24} />
            </TaskButton>
            <TaskButton $running aria-label="Process Hacker">
                <HackerIcon size={24} />
            </TaskButton>
            <TaskButton $running aria-label="Notepad">
                <NotepadIcon />
            </TaskButton>
            <TaskButton $running aria-label="Setup">
                <SetupIcon />
            </TaskButton>
            <Tray>
                <Chevron size={14} dir="up" color="#fff" weight={1} />
                <svg width="18" height="16" viewBox="0 0 18 16" fill="none" stroke="#fff">
                    <path d="M5.500 3.500h11v8H4.500M7 14.500h6M10 11.500v3M1.500 2.500h4v4h-4zM3.500 6.500v7" />
                </svg>
                <svg width="18" height="16" viewBox="0 0 18 16" fill="none" stroke="#fff">
                    <path d="M1.500 5.500h2l4-4v12l-4-4h-2z" />
                    <circle cx="12.500" cy="11" r="4.500" fill="#d9303a" stroke="none" />
                    <path d="M10.500 9l4 4M14.500 9l-4 4" strokeWidth="1.300" />
                </svg>
                <NoticeButton aria-label="Notifications">
                    <svg width="17" height="17" viewBox="0 0 17 17">
                        <path d="M0 0h17v13H7l-3 3v-3H0z" fill="#fff" />
                        <path d="M3 3.500h11M3 6.500h11M3 9.500h7" stroke="#222" />
                    </svg>
                    <NoticeCount>1</NoticeCount>
                </NoticeButton>
                <Divider $color="#6b7480" />
            </Tray>
        </Taskbar>
        <PointerMark width="9" height="9" fill="none" stroke="#111">
            <path d="M1 0.500h3l.5 1 .5-1h3M4.500 1v8" />
        </PointerMark>
    </Desktop>
);

export default App;
